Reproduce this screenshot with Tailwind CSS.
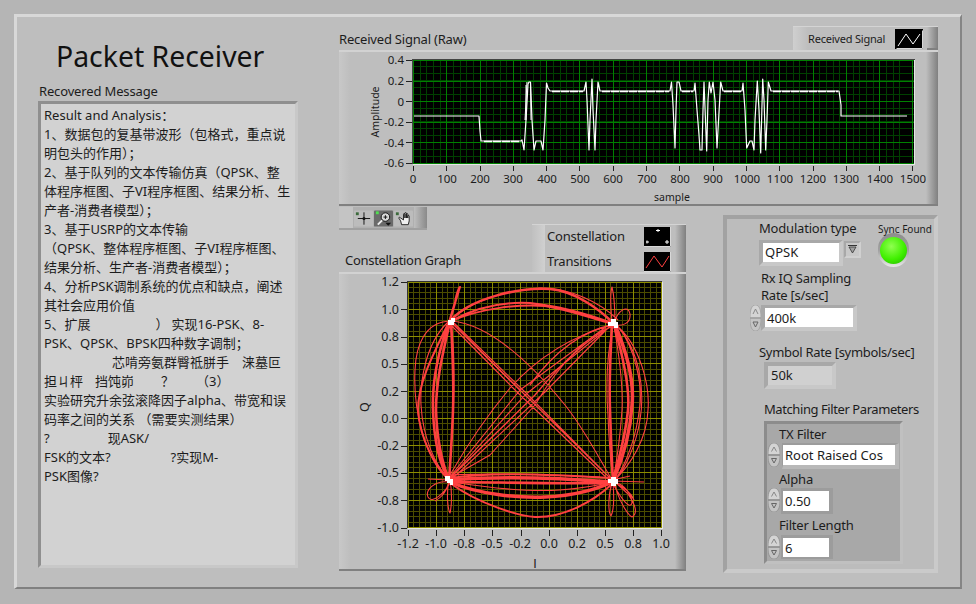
<!DOCTYPE html>
<html lang="zh-CN">
<head>
<meta charset="utf-8">
<title>Packet Receiver</title>
<script src="https://cdn.jsdelivr.net/npm/@tailwindcss/browser@4"></script>
</head>
<body class="m-0 w-[976px] h-[604px] overflow-hidden bg-[#b5b5b5] text-[#1c1c1c] font-['Noto_Sans','Noto_Sans_CJK_SC',sans-serif] text-[13px]">
<div class="mt-[14px] ml-[14px] w-[948px] h-[575px] box-border bg-[#bebebe] border-[3px] border-t-[#d8d8d8] border-l-[#d8d8d8] border-r-[#858585] border-b-[#808080] border-r-[2px] border-b-[2px] flex">

  <!-- left column -->
  <div class="ml-[21px] w-[260px] shrink-0 flex flex-col">
    <div class="mt-[20px] ml-[18px] h-[38px] leading-[38px] text-[28.4px] text-[#111] whitespace-nowrap">Packet Receiver</div>
    <div class="mt-[7px] ml-[1px] h-[19px] leading-[19px] tracking-[-0.15px]">Recovered Message</div>
    <div class="h-[467px] box-border bg-[#d2d2d2] border-[3px] border-t-[#8f8f8f] border-l-[#8f8f8f] border-r-[#c8c8c8] border-b-[#c8c8c8] pt-[2px] pl-[3px] leading-[19px] whitespace-pre overflow-hidden flex flex-col">
      <div>Result and Analysis：</div>
      <div>1、数据包的复基带波形（包格式，重点说</div>
      <div>明包头的作用）；</div>
      <div>2、基于队列的文本传输仿真（QPSK、整</div>
      <div>体程序框图、子VI程序框图、结果分析、生</div>
      <div>产者-消费者模型）；</div>
      <div>3、基于USRP的文本传输</div>
      <div>（QPSK、整体程序框图、子VI程序框图、</div>
      <div>结果分析、生产者-消费者模型）；</div>
      <div>4、分析PSK调制系统的优点和缺点，阐述</div>
      <div>其社会应用价值</div>
      <div>5、扩展<span class="ml-[65px]">）</span><span class="ml-[3px]">实现16-PSK、8-</span></div>
      <div>PSK、QPSK、BPSK四种数字调制；</div>
      <div><span class="ml-[68px]">芯啃旁氨群臀祗胼手</span><span class="ml-[13px]">涞墓叵</span></div>
      <div>担ㄐ枰<span class="ml-[12px]">挡饨峁</span><span class="ml-[27px]">？</span><span class="ml-[22px]">（3）</span></div>
      <div>实验研究升余弦滚降因子alpha、带宽和误</div>
      <div>码率之间的关系 （需要实测结果）</div>
      <div>?<span class="ml-[58px]">现ASK/</span></div>
      <div>FSK的文本?<span class="ml-[60px]">?实现M-</span></div>
      <div>PSK图像?</div>
    </div>
  </div>

  <!-- right area -->
  <div class="ml-[41px] w-[599px] shrink-0 flex flex-col">
    <div class="mt-[8px] h-[25px] flex justify-between items-end">
      <div class="leading-[19px] mb-[1px] tracking-[-0.2px]">Received Signal (Raw)</div>
      <div class="w-[145px] h-[24px] box-border flex border-t border-t-[#d4d4d4] bg-[#bebebe]">
        <div class="w-[15px] bg-linear-to-r from-[#cfcfcf] to-[#bebebe]"></div>
        <div class="flex-1 flex items-center">
          <span class="text-[11px] leading-[14px] whitespace-nowrap w-[87px] tracking-[-0.2px]">Received Signal</span>
          <svg class="w-[28px] h-[20px] block" viewBox="0 0 28 20"><rect width="28" height="20" fill="#000"/><path d="M1 19h26v-18" stroke="#d8d8d8" fill="none" transform="translate(.5 .5)"/><polyline points="3,17 11,5 18,15 25,5" fill="none" stroke="#fff"/></svg>
        </div>
        <div class="w-[11px] border-b-2 border-b-[#808080] bg-linear-to-r from-[#bebebe] to-[#808080]"></div>
      </div>
    </div>

    <!-- waveform graph -->
    <div class="relative h-[156px] flex bg-[#bebebe] border-t-2 border-t-[#d2d2d2] border-b-2 border-b-[#808080] box-border">
      <div class="w-[11px] bg-linear-to-r from-[#c8c8c8] to-[#bebebe]"></div>
      <div class="flex-1"></div>
      <div class="w-[12px] bg-linear-to-r from-[#bebebe] to-[#808080]"></div>
      <svg class="absolute left-0 top-[-2px] block" width="599" height="156" viewBox="339 50 599 156" font-size="11.5" fill="#1c1c1c">
        <rect x="413" y="59" width="501" height="105" fill="#000"/>
        <path stroke="#004000" fill="none" shape-rendering="crispEdges" d="M413.5 59v105m6.66-105v105m6.66-105v105m6.66-105v105m6.66-105v105m6.66-105v105m6.66-105v105m6.66-105v105m6.66-105v105m6.66-105v105m6.66-105v105m6.66-105v105m6.66-105v105m6.66-105v105m6.66-105v105m6.66-105v105m6.66-105v105m6.66-105v105m6.66-105v105m6.66-105v105m6.66-105v105m6.66-105v105m6.66-105v105m6.66-105v105m6.66-105v105m6.66-105v105m6.66-105v105m6.66-105v105m6.66-105v105m6.66-105v105m6.66-105v105m6.66-105v105m6.66-105v105m6.66-105v105m6.66-105v105m6.66-105v105m6.66-105v105m6.66-105v105m6.66-105v105m6.66-105v105m6.66-105v105m6.66-105v105m6.66-105v105m6.66-105v105m6.66-105v105m6.66-105v105m6.66-105v105m6.66-105v105m6.66-105v105m6.66-105v105m6.66-105v105m6.66-105v105m6.66-105v105m6.66-105v105m6.66-105v105m6.66-105v105m6.66-105v105m6.66-105v105m6.66-105v105m6.66-105v105m6.66-105v105m6.66-105v105m6.66-105v105m6.66-105v105m6.66-105v105m6.66-105v105m6.66-105v105m6.66-105v105m6.66-105v105m6.66-105v105m6.66-105v105m6.66-105v105m6.66-105v105m6.66-105v105M413 60h501m-501 6.87h501m-501 6.87h501m-501 6.87h501m-501 6.87h501m-501 6.87h501m-501 6.87h501m-501 6.87h501m-501 6.87h501m-501 6.87h501m-501 6.87h501m-501 6.87h501m-501 6.87h501m-501 6.87h501m-501 6.87h501"/>
        <path stroke="#008000" fill="none" shape-rendering="crispEdges" d="M413.5 59v105m33.3-105v105m33.3-105v105m33.3-105v105m33.3-105v105m33.3-105v105m33.3-105v105m33.3-105v105m33.3-105v105m33.3-105v105m33.3-105v105m33.3-105v105m33.3-105v105m33.3-105v105m33.3-105v105m33.3-105v105M413 60.5h501m-501 20.6h501m-501 20.6h501m-501 20.6h501m-501 20.6h501m-501 20.6h501"/>
        <path fill="none" stroke="#fff" stroke-width="1.2" stroke-linejoin="round" d="M414 116H479L480 131L481 141H521L522 140L524 150L526 120L528 84L529 82L530.500 82L532 120L534 150L536 141L541 141L543 150L545 120L546.500 83L548 88L550 91H584L586 82L587 100L589 150L590 120L592 79L593 110L595 150L596 120L598 82L600 91H670L671.500 82L673 105L675 148L676 110L677 82L679 82L681 91H694L695 83L697 110L699 135L700 150L702 150L703 110L704 82L706.700 151L708 100L709.300 82L711 93L713 82L715 100L717 148L718 130L720.700 82L723 91H742L743 83L745 110L746.700 148L750 141L752 141L754 150L755 120L757.300 81L759 110L760.700 153L762.700 79L764 100L765.700 150L767 120L768.300 82L771 91H839L841 105V116H907"/>
        <path fill="none" stroke="#fff" stroke-width="1" d="M526 85L526 120M530.500 82L531 120M527 82L525 120"/>
        <path fill="none" stroke="#fff" stroke-width="1.6" stroke-dasharray="8 1" d="M484 141.500H520M552 91.500H583M602 91.500H669M682 91.500H693M724 91.500H741M773 91.500H838"/>
        <path stroke="#e6e6e6" fill="none" shape-rendering="crispEdges" d="M413 164.5h501.5V59"/>
        <path stroke="#444" fill="none" shape-rendering="crispEdges" d="M412.5 164V59h502"/>
        <path stroke="#222" fill="none" shape-rendering="crispEdges" d="M406 60.5h6m-6 20.6h6m-6 20.6h6m-6 20.6h6m-6 20.6h6m-6 20.6h6M413.5 166v5m33.3-5v5m33.3-5v5m33.3-5v5m33.3-5v5m33.3-5v5m33.3-5v5m33.3-5v5m33.3-5v5m33.3-5v5m33.3-5v5m33.3-5v5m33.3-5v5m33.3-5v5m33.3-5v5m33.3-5v5"/>
        <g text-anchor="end">
          <text x="404" y="64">0.4</text><text x="404" y="85">0.2</text><text x="404" y="106">0</text><text x="404" y="126">-0.2</text><text x="404" y="147">-0.4</text><text x="404" y="167">-0.6</text>
        </g>
        <g text-anchor="middle">
          <text x="413" y="183">0</text><text x="447" y="183">100</text><text x="480" y="183">200</text><text x="513" y="183">300</text><text x="547" y="183">400</text><text x="580" y="183">500</text><text x="613" y="183">600</text><text x="647" y="183">700</text><text x="680" y="183">800</text><text x="713" y="183">900</text><text x="747" y="183">1000</text><text x="780" y="183">1100</text><text x="813" y="183">1200</text><text x="846" y="183">1300</text><text x="880" y="183">1400</text><text x="913" y="183">1500</text>
          <text x="672" y="201" font-size="10.5">sample</text>
          <text transform="translate(379 112) rotate(-90)" font-size="10.5">Amplitude</text>
        </g>
      </svg>
    </div>

    <!-- lower part -->
    <div class="flex gap-[37px]">
      <div class="w-[347px] shrink-0 flex flex-col">
        <div class="mt-[1px] w-[88px] h-[23px] flex bg-[#bebebe] border-b-2 border-b-[#a0a0a0] box-border">
          <div class="w-[14px] bg-[#c4c4c4]"></div>
          <div class="flex gap-[1px] pt-[3px] bg-[#b0b0b0] px-[1px]">
            <svg class="block" width="19" height="17" viewBox="0 0 20 17"><rect width="20" height="17" rx="1" fill="#bcbcbc"/><rect x="2" y="2" width="3" height="3" fill="#3c6a3c"/><path d="M10.500 2v13M4 8.500h13" stroke="#111" fill="none"/><circle cx="10.500" cy="8.500" r="1.600" fill="#111"/></svg>
            <svg class="block" width="19" height="17" viewBox="0 0 20 17"><rect width="20" height="17" rx="1" fill="#6a6a6a"/><rect x="2" y="1" width="3" height="3" fill="#50e050"/><circle cx="12" cy="7" r="4.500" fill="#d8d8d8" stroke="#111"/><path d="M10 7h4M12 5v4" stroke="#111"/><path d="M8.500 10.500L4 15" stroke="#eee" stroke-width="2"/><path d="M12 13h6l-3 3z" fill="#111"/></svg>
            <svg class="block" width="19" height="17" viewBox="0 0 20 17"><rect width="20" height="17" rx="1" fill="#bcbcbc"/><rect x="2" y="2" width="3" height="3" fill="#3c6a3c"/><path d="M5 8l2 3 1 4h7l1-4V6c0-1-1.500-1-1.500 0V8V4c0-1-1.500-1-1.500 0V8V3c0-1-1.500-1-1.500 0V8V4c0-1-1.500-1-1.500 0v6L7 8c-1-1-2-1-2 0z" fill="#f0f0f0" stroke="#111" stroke-width=".9"/></svg>
          </div>
          <div class="flex-1 bg-linear-to-r from-[#bebebe] to-[#8a8a8a]"></div>
        </div>
        <div class="mt-[-6px] h-[48px] flex justify-between items-end">
          <div class="ml-[6px] leading-[19px] mb-[2px] tracking-[-0.3px]">Constellation Graph</div>
          <div class="w-[154px] h-[48px] box-border flex border-t border-t-[#d4d4d4] bg-[#bebebe]">
            <div class="w-[13px] bg-linear-to-r from-[#c0c0c0] to-[#d0d0d0]"></div>
            <div class="flex-1 flex flex-col pl-[2px] pt-[2px] gap-[5px]">
              <div class="h-[20px] flex items-center">
                <span class="w-[97px] whitespace-nowrap tracking-[-0.2px]">Constellation</span>
                <svg class="w-[27px] h-[20px] block" viewBox="0 0 27 20"><rect width="27" height="20" fill="#000"/><path d="M0 19.500h26.500V0" stroke="#d8d8d8" fill="none"/><path d="M12 3.500h4M14 2v3M2 15h3M3 13.500v3M21 15h4M23 13v4" stroke="#fff"/></svg>
              </div>
              <div class="h-[20px] flex items-center">
                <span class="w-[97px] whitespace-nowrap tracking-[-0.2px]">Transitions</span>
                <svg class="w-[27px] h-[20px] block" viewBox="0 0 27 20"><rect width="27" height="20" fill="#000"/><path d="M0 19.500h26.500V0" stroke="#d8d8d8" fill="none"/><polyline points="2,16 10,4 18,15 25,4" fill="none" stroke="#ff4040"/></svg>
              </div>
            </div>
            <div class="w-[11px] bg-linear-to-r from-[#bebebe] to-[#808080]"></div>
          </div>
        </div>

        <!-- constellation graph -->
        <div class="relative h-[299px] box-border flex bg-[#bebebe] border-t-2 border-t-[#d2d2d2] border-b-2 border-b-[#808080]">
          <div class="w-[11px] bg-linear-to-r from-[#c8c8c8] to-[#bebebe]"></div>
          <div class="flex-1"></div>
          <div class="w-[11px] bg-linear-to-r from-[#bebebe] to-[#808080]"></div>
          <svg class="absolute left-0 top-[-2px] block" width="347" height="299" viewBox="339 272 347 299" font-size="12.5" fill="#1c1c1c">
            <rect x="408" y="282" width="254" height="246" fill="#000"/>
            <path stroke="#4c4c00" fill="none" shape-rendering="crispEdges" d="M408.3 282v246m5.63-246v246m5.63-246v246m5.63-246v246m5.63-246v246m5.63-246v246m5.63-246v246m5.63-246v246m5.63-246v246m5.63-246v246m5.63-246v246m5.63-246v246m5.63-246v246m5.63-246v246m5.63-246v246m5.63-246v246m5.63-246v246m5.63-246v246m5.63-246v246m5.63-246v246m5.63-246v246m5.63-246v246m5.63-246v246m5.63-246v246m5.63-246v246m5.63-246v246m5.63-246v246m5.63-246v246m5.63-246v246m5.63-246v246m5.63-246v246m5.63-246v246m5.63-246v246m5.63-246v246m5.63-246v246m5.63-246v246m5.63-246v246m5.63-246v246m5.63-246v246m5.63-246v246m5.63-246v246m5.63-246v246m5.63-246v246m5.63-246v246m5.63-246v246M408 282h254m-254 5.456h254m-254 5.456h254m-254 5.456h254m-254 5.456h254m-254 5.456h254m-254 5.456h254m-254 5.456h254m-254 5.456h254m-254 5.456h254m-254 5.456h254m-254 5.456h254m-254 5.456h254m-254 5.456h254m-254 5.456h254m-254 5.456h254m-254 5.456h254m-254 5.456h254m-254 5.456h254m-254 5.456h254m-254 5.456h254m-254 5.456h254m-254 5.456h254m-254 5.456h254m-254 5.456h254m-254 5.456h254m-254 5.456h254m-254 5.456h254m-254 5.456h254m-254 5.456h254m-254 5.456h254m-254 5.456h254m-254 5.456h254m-254 5.456h254m-254 5.456h254m-254 5.456h254m-254 5.456h254m-254 5.456h254m-254 5.456h254m-254 5.456h254m-254 5.456h254m-254 5.456h254m-254 5.456h254m-254 5.456h254m-254 5.456h254"/>
            <path stroke="#8c8c00" fill="none" shape-rendering="crispEdges" d="M408.3 282v246m28.15-246v246m28.15-246v246m28.15-246v246m28.15-246v246m28.15-246v246m28.15-246v246m28.15-246v246m28.15-246v246m28.15-246v246M408 282h254m-254 27.28h254m-254 27.28h254m-254 27.28h254m-254 27.28h254m-254 27.28h254m-254 27.28h254m-254 27.28h254m-254 27.28h254m-254 27.28h254"/>
            <!-- transitions -->
            <g fill="none" stroke="#ff4040" stroke-linejoin="round">
              <path stroke-width="1.1" d="M452 320C470 300 510 290 540 288C570 288 600 302 618 320M450 321C425 322 416 345 415 370C413 410 425 460 449 480M452 321C490 325 530 362 565 405C585 430 600 460 612 480M452 323L520 390L610 478M453 322L525 392L612 480M451 325L517 392L611 482M450 478L525 395L612 325M451 480L545 392L610 326M449 478L520 390L610 324M450 475C470 440 490 412 510 388C540 355 575 335 612 325M613 326C590 335 565 355 535 405L490 455L450 478M616 325C640 345 650 385 648 410C647 440 630 465 614 481M616 325C640 350 645 390 640 420C636 445 625 470 614 481M613 325C606 360 606 390 608 415C609 445 611 465 613 481M451 322C456 360 454 400 452 430C451 450 450 470 449 480M452 475C490 473 560 475 600 477M452 482C490 488 530 492 560 490C585 488 600 485 612 482M449 480L428 479M449 482C435 480 425 490 428 497C432 505 445 492 450 483M449 482C445 495 440 498 435 501M449 480C446 495 448 510 450 513C452 505 452 490 450 481M612 481L644 482M612 480L630 476M615 482C625 485 632 495 632 503C630 510 622 500 613 484M615 484C618 500 628 515 632 517C640 512 632 500 628 494L614 481M612 483C608 495 608 512 611 516C614 510 614 495 613 483M614 482C620 486 630 490 634 500M614 323C618 310 628 304 630 314C631 324 622 326 615 325M612 322C610 300 611 290 612 287C614 295 615 310 615 324M448 322C424 345 420 385 421 405C423 440 436 465 448 479M618 326C636 350 642 385 640 405C636 440 625 465 615 480M614 326C620 360 623 390 622 410C620 440 616 465 613 481"/>
              <path stroke-width="1.4" d="M612 325C585 330 555 350 530 385M612 326C585 340 560 365 535 395L450 478M452 323L520 390"/>
              <path stroke-width="2" d="M451 321C480 305 510 302 530 303C560 306 590 315 612 323M452 321C480 308 520 304 545 306C570 310 590 318 613 324M450 321L456 300L460 287Q458 287 455 302L449 322M449 322C430 360 418 385 418 410C420 440 435 465 449 480M450 478C490 472 540 474 612 478M450 483C480 505 520 516 535 517C565 518 595 500 612 484"/>
              <path stroke-width="2.6" d="M450 321C470 298 520 287 550 289C575 291 600 310 612 322M449 322C437 355 432 385 433 410C434 440 440 465 449 480M450 322C441 360 436 385 436 410C437 440 443 465 449 480M451 322C453 360 454 385 453 410C452 440 450 465 449 480M614 325C624 360 630 390 628 410C625 440 617 465 613 481M612 325C610 360 609 385 610 410C611 440 612 465 613 481M450 482C495 482 540 484 612 483"/>
              <path stroke-width="3.500" d="M450 480C500 476 560 478 612 482M450 482C480 495 520 498 545 497C575 496 600 488 612 482M615 325C630 360 634 385 632 405C630 440 620 465 613 481"/>
            </g>
            <g fill="#fff" shape-rendering="crispEdges">
              <path d="M448 320h3v-2h4v4h-1v3h-6z"/>
              <path d="M608 322h3v-3h5v3h2v6h-4v-2h-6z"/>
              <path d="M445 476h5v3h3v6h-3v-2h-3v-2h-2z"/>
              <path d="M608 479h3v-2h5v2h2v5h-2v2h-5v-3h-3z"/>
            </g>
            <path stroke="#e6e6e6" fill="none" shape-rendering="crispEdges" d="M408 528.500h254.500V282"/>
            <path stroke="#333" fill="none" shape-rendering="crispEdges" d="M407.500 528V281.500H662"/>
            <path stroke="#222" fill="none" shape-rendering="crispEdges" d="M401 282.500h6m-6 27.28h6m-6 27.28h6m-6 27.28h6m-6 27.28h6m-6 27.28h6m-6 27.28h6m-6 27.28h6m-6 27.28h6m-6 27.28h6M408.500 530v6m28.15-6v6m28.15-6v6m28.15-6v6m28.15-6v6m28.15-6v6m28.15-6v6m28.15-6v6m28.15-6v6m28.15-6v6"/>
            <g text-anchor="end">
              <text x="399" y="286">1.2</text><text x="399" y="314">1.0</text><text x="399" y="341">0.8</text><text x="399" y="368">0.5</text><text x="399" y="396">0.2</text><text x="399" y="423">0.0</text><text x="399" y="450">-0.2</text><text x="399" y="477">-0.5</text><text x="399" y="505">-0.8</text><text x="399" y="532">-1.0</text>
            </g>
            <g text-anchor="middle">
              <text x="408" y="548">-1.2</text><text x="436" y="548">-1.0</text><text x="464" y="548">-0.8</text><text x="492" y="548">-0.5</text><text x="520" y="548">-0.2</text><text x="549" y="548">0.0</text><text x="577" y="548">0.2</text><text x="605" y="548">0.5</text><text x="633" y="548">0.8</text><text x="661" y="548">1.0</text>
              <text x="535" y="568" font-family="Liberation Sans">I</text>
              <text transform="translate(369 407) rotate(-90)">Q</text>
            </g>
          </svg>
        </div>
      </div>

      <!-- controls panel -->
      <div class="mt-[9px] w-[216px] h-[358px] box-border bg-[#bcbcbc] border-[4px] border-t-[#a2a2a2] border-l-[#a2a2a2] border-r-[#cacaca] border-b-[#cacaca] flex flex-col">
        <div class="h-[46px] flex">
          <div class="ml-[32px] w-[119px] shrink-0">
            <div class="h-[18px] leading-[18px] tracking-[-0.2px] whitespace-nowrap">Modulation type</div>
            <div class="mt-[3px] flex">
              <div class="w-[84px] h-[26px] box-border bg-white border-[4px] border-t-[3px] border-t-[#a8a8a8] border-l-[#a8a8a8] border-r-[#c8c8c8] border-b-[#c8c8c8] pl-[2px] leading-[19px]">QPSK</div>
              <div class="ml-[1px] mt-[1px] w-[17px] h-[17px] box-border bg-[#c8c8c8] border-2 border-t-[#a8a8a8] border-l-[#a8a8a8] border-r-[#d0d0d0] border-b-[#d0d0d0] flex items-center justify-center">
                <svg width="9" height="9" viewBox="0 0 9 9" class="block"><path d="M0 .5h9" stroke="#333"/><path d="M1 2h7L4.500 8z" fill="#a0a0a0" stroke="#333" stroke-width=".8"/></svg>
              </div>
            </div>
          </div>
          <div class="w-[55px] shrink-0">
            <div class="mt-[2px] h-[16px] leading-[16px] text-[10px] whitespace-nowrap">Sync Found</div>
            <div class="-mt-[4px] w-[31px] h-[34px] rounded-full bg-linear-to-b from-[#8c8c8c] via-[#a0a0a0] to-[#e8e8e8] flex items-center justify-center">
              <div class="w-[27px] h-[27px] rounded-full bg-[radial-gradient(circle_at_42%_35%,#90ff50,#40f000_55%,#20b000)]"></div>
            </div>
          </div>
        </div>
        <div class="ml-[34px] mt-[5px] leading-[17px] tracking-[-0.25px]">Rx IQ Sampling<br>Rate [s/sec]</div>
        <div class="ml-[23px] flex mt-[1px]">
          <svg class="block shrink-0" width="11" height="26" viewBox="0 0 11 26"><path d="M5.500 0C9 0 11 4 11 12.500H0C0 4 2 0 5.500 0Z" fill="#d4d4d4" stroke="#9a9a9a" stroke-width=".7"/><path d="M5.500 26C9 26 11 22 11 13.500H0C0 22 2 26 5.500 26Z" fill="#c4c4c4" stroke="#9a9a9a" stroke-width=".7"/><path d="M3 9L5.500 4L8 9" fill="none" stroke="#888"/><path d="M3 17L5.500 22L8 17Z" fill="none" stroke="#666"/></svg>
          <div class="w-[96px] h-[26px] box-border bg-white border-[4px] border-t-[3px] border-t-[#a8a8a8] border-l-[#a8a8a8] border-r-[#c8c8c8] border-b-[#c8c8c8] pl-[2px] leading-[20px]">400k</div>
        </div>
        <div class="ml-[32px] mt-[12px] h-[18px] leading-[18px] whitespace-nowrap tracking-[-0.3px]">Symbol Rate [symbols/sec]</div>
        <div class="ml-[37px] mt-[1px] w-[72px] h-[27px] box-border bg-[#d0d0d0] border-[4px] border-t-[#a8a8a8] border-l-[#a8a8a8] border-r-[#c8c8c8] border-b-[#c8c8c8] pl-[3px] leading-[19px]">50k</div>
        <div class="ml-[37px] mt-[11px] h-[18px] leading-[18px] whitespace-nowrap tracking-[-0.42px]">Matching Filter Parameters</div>
        <div class="ml-[37px] mt-[3px] w-[139px] h-[143px] box-border bg-[#a8a8a8] border-[3px] border-t-[#8c8c8c] border-l-[#8c8c8c] border-r-[#c0c0c0] border-b-[#c0c0c0]">
          <div class="ml-[12px] mt-[1px] h-[18px] leading-[18px] tracking-[-0.2px]">TX Filter</div>
          <div class="ml-[1px] flex">
            <svg class="block shrink-0" width="12" height="24" viewBox="0 0 12 24"><path d="M6 0C10 0 12 4 12 11.500H0C0 4 2 0 6 0Z" fill="#d4d4d4" stroke="#8a8a8a" stroke-width=".7"/><path d="M6 24C10 24 12 20 12 12.500H0C0 20 2 24 6 24Z" fill="#c4c4c4" stroke="#8a8a8a" stroke-width=".7"/><path d="M3.500 8.500L6 4L8.500 8.500" fill="none" stroke="#888"/><path d="M3.500 15.500L6 20L8.500 15.500Z" fill="none" stroke="#666"/></svg>
            <div class="ml-[2px] w-[117px] h-[26px] box-border bg-white border-t-2 border-t-[#9c9c9c] border-l border-l-[#9c9c9c] border-r-4 border-r-[#b8b8b8] border-b-4 border-b-[#b8b8b8] pl-[2px] leading-[21px] whitespace-nowrap">Root Raised Cos</div>
          </div>
          <div class="ml-[12px] mt-[1px] h-[18px] leading-[18px] tracking-[-0.2px]">Alpha</div>
          <div class="ml-[1px] flex">
            <svg class="block shrink-0" width="12" height="24" viewBox="0 0 12 24"><path d="M6 0C10 0 12 4 12 11.500H0C0 4 2 0 6 0Z" fill="#d4d4d4" stroke="#8a8a8a" stroke-width=".7"/><path d="M6 24C10 24 12 20 12 12.500H0C0 20 2 24 6 24Z" fill="#c4c4c4" stroke="#8a8a8a" stroke-width=".7"/><path d="M3.500 8.500L6 4L8.500 8.500" fill="none" stroke="#888"/><path d="M3.500 15.500L6 20L8.500 15.500Z" fill="none" stroke="#666"/></svg>
            <div class="ml-[1px] w-[52px] h-[26px] box-border bg-white border-t-[3px] border-t-[#9c9c9c] border-l-2 border-l-[#9c9c9c] border-r-4 border-r-[#9c9c9c] border-b-[3px] border-b-[#9c9c9c] pl-[2px] leading-[20px]">0.50</div>
          </div>
          <div class="ml-[12px] mt-[2px] h-[19px] leading-[19px] tracking-[-0.2px]">Filter Length</div>
          <div class="ml-[1px] flex">
            <svg class="block shrink-0" width="12" height="24" viewBox="0 0 12 24"><path d="M6 0C10 0 12 4 12 11.500H0C0 4 2 0 6 0Z" fill="#d4d4d4" stroke="#8a8a8a" stroke-width=".7"/><path d="M6 24C10 24 12 20 12 12.500H0C0 20 2 24 6 24Z" fill="#c4c4c4" stroke="#8a8a8a" stroke-width=".7"/><path d="M3.500 8.500L6 4L8.500 8.500" fill="none" stroke="#888"/><path d="M3.500 15.500L6 20L8.500 15.500Z" fill="none" stroke="#666"/></svg>
            <div class="ml-[1px] w-[52px] h-[24px] box-border bg-white border-t-[3px] border-t-[#9c9c9c] border-l-2 border-l-[#9c9c9c] border-r-4 border-r-[#9c9c9c] border-b-[2px] border-b-[#9c9c9c] pl-[2px] leading-[20px]">6</div>
          </div>
        </div>
      </div>
    </div>
  </div>
</div>
</body>
</html>
